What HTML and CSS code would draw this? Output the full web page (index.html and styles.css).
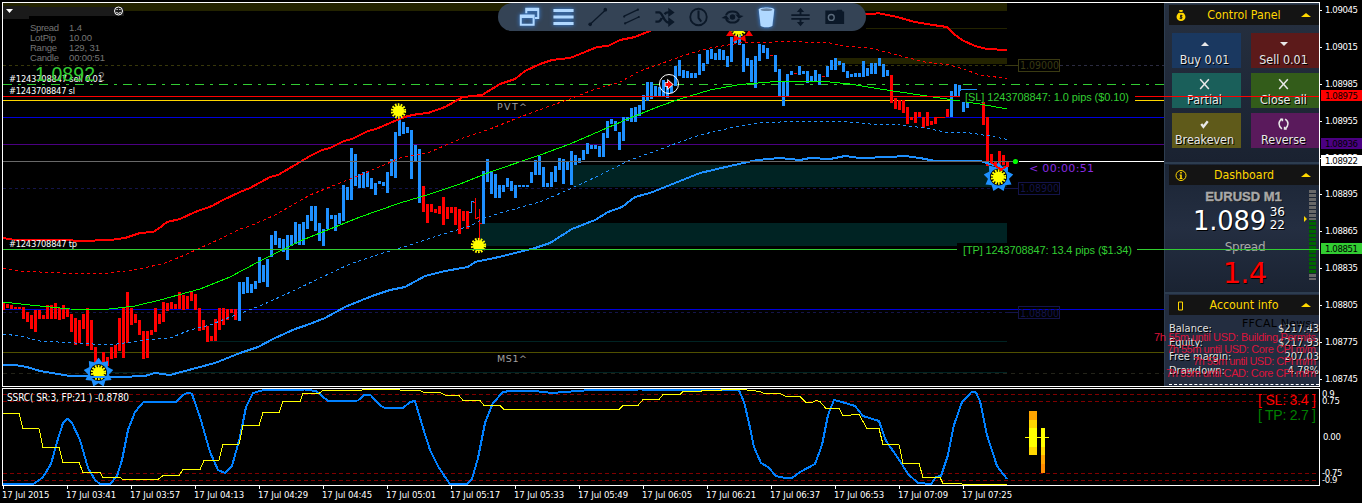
FILE: index.html
```html
<!DOCTYPE html>
<html lang="en">
<head>
  <meta charset="UTF-8" />
  <meta name="viewport" content="width=device-width, initial-scale=1.0"/>
  <title>EURUSD M1</title>
  <link rel="stylesheet" href="styles.css">
</head>
<body>
  <div class="terminal">
    <div class="workspace">

      <!-- price chart and oscillator share one canvas -->
      <svg class="chart" width="1320" height="490" viewBox="0 0 1320 490">
        <defs>
          <symbol id="sun" viewBox="-8 -8 16 16">
            <circle r="5.6" fill="#ffff00"/>
            <circle r="6.2" fill="none" stroke="#ffff00" stroke-width="3" stroke-dasharray="1.600 1.180"/>
          </symbol>
          <symbol id="bigSun" viewBox="-15 -15 30 30">
            <g fill="#1e90ff">
              <path id="ray" d="M-4.4 -9L0 -15L4.4 -9Z"/>
              <use href="#ray" transform="rotate(40)"/>
              <use href="#ray" transform="rotate(80)"/>
              <use href="#ray" transform="rotate(120)"/>
              <use href="#ray" transform="rotate(160)"/>
              <use href="#ray" transform="rotate(200)"/>
              <use href="#ray" transform="rotate(240)"/>
              <use href="#ray" transform="rotate(280)"/>
              <use href="#ray" transform="rotate(320)"/>
            </g>
            <circle r="9.4" fill="#000" stroke="#1e90ff" stroke-width="1.6"/>
          </symbol>
        </defs>

        <!-- zones -->
        <g class="crisp">
          <rect x="3" y="3" width="1004" height="8" fill="#232300"/>
          <rect x="835" y="58" width="172" height="6" fill="#232300"/>
          <rect x="573" y="165" width="434" height="22" fill="#002323"/>
          <rect x="479" y="223" width="528" height="23" fill="#002323"/>
          <path class="line" d="M866 28.5H1007" stroke="#232300"/>
          <path class="line" d="M208 341.5H1007M100 372.5H1007" stroke="#002323"/>
        </g>

        <!-- levels -->
        <g class="crisp line">
          <path d="M3 65.5H1007" stroke="#37370a" stroke-dasharray="3 3"/>
          <path d="M1060 65.5H1164" stroke="#2b2b40" stroke-dasharray="3 3"/>
          <path d="M3 188.5H1007M3 312.5H1007" stroke="#14144b" stroke-dasharray="3 3"/>
          <path d="M3 373.5H1164" stroke="#232319" stroke-dasharray="4 4"/>
          <path d="M3 84.5H1164" stroke="#32cd32" stroke-dasharray="9 6 3 6"/>
          <path d="M3 100.5H1164" stroke="#ffd700"/>
          <path d="M3 117.5H1164M3 309.5H1164" stroke="#0000dc"/>
          <path d="M3 144.5H1164" stroke="#4b0082"/>
          <path d="M3 352.5H1164" stroke="#505000"/>
        </g>

        <!-- candles are filled in by chart.js -->
        <g class="crisp candles">
          <path id="bearBars" class="bar bear" d=""/>
          <path id="bullBars" class="bar bull" d=""/>
          <path class="line bull" d="M469 212.5H471.5V201.5H474"/>
          <path class="line bear" d="M473 202.5H475.5M475.5 198V219M475.5 218.5H478M479.5 209V240M477 217.5H479M479 223.5H482"/>
          <path class="line bear" d="M770 55.5H773M794 73.5H797M822 76.5H825M937 117.5H945"/>
        </g>

        <!-- channel -->
        <g class="crisp curves">
          <path class="thick bear" d="M3 238L12 239.500L65 240L80 241L110 240L125 238L140 233L153 232L158 229L167 222L180 219L195 212L212 206L223 200L240 192L250 188L270 177L278 175L295 165L310 156L322 150L330 148L344 141L352 139L368 131L376 129L390 123L402 118L408 116L418 114L428 113L445 107L463 97L482 95L500 84L515 79L525 71L540 64L552 60L570 58L585 52L597 47L608 46L620 40L635 37L652 30L690 20L740 14L880 13.500L897 17L915 22L933 25L947 27L954 34L962 40L975 46L987 49L1007 50"/>
          <path class="line bear dash" d="M3 268L20 271L60 273L110 273L140 269L165 263L185 255L200 248L220 239L240 229L250 226L275 215L310 195L330 187L350 179L370 171L400 158L430 152L460 139L490 129L520 117L550 106L570 99L590 91L620 82L640 71L660 64L685 55L710 48L740 43L790 41.500L830 43L845 46L870 48L890 53L905 57L925 62L950 65L960 68L980 75L1007 78.500"/>
          <path class="line" stroke="#00ff00" d="M3 302L30 305L70 309L105 309.500L135 306L160 300L200 289L230 277L260 261L300 241L330 229L360 217L400 203L430 194L460 184L490 172L540 155L570 144L600 131L630 118L660 106L680 99L710 90L740 84.500L770 82L800 81L830 82L850 84L880 89L920 95L960 101L980 104L1007 109"/>
          <path class="line bull dash" d="M3 334L20 336L40 341L75 343L110 345L145 340L170 338L190 330L210 325L230 317L260 306L295 290L320 278L350 264L380 254L410 245L440 235L470 226L485 218L500 213L540 202L570 189L600 175L630 160L650 153L680 142L700 135L730 128L760 123L790 121.500L850 122L870 124L900 125L925 128L945 132L970 133L990 136L1007 139.500"/>
          <path class="thick bull" d="M3 365L15 365L27 367L40 371L70 376L120 377L145 376L155 373L170 375L185 371L215 363L240 353L258 347L275 338L295 329L307 325L325 318L345 307L362 300L375 295L390 290L405 287L425 276L445 271L468 267L475 262L499 257L535 248L550 243L572 229L595 220L608 212L622 207L635 197L650 193L680 181L700 173L730 166L757 160L780 158L800 160L810 158L830 159L845 156L860 158L890 157L905 156L920 158L930 160L940 161.500L965 161L982 161.500L990 164L1000 167L1008 170"/>
        </g>

        <!-- bid line -->
        <path class="crisp line" d="M3 161.500H1013" stroke="#696969"/>
        <path class="crisp line" d="M1019 161.500H1164" stroke="#fff"/>
        <circle cx="1015.500" cy="161.500" r="2.600" fill="#00ff00"/>

        <!-- round number boxes -->
        <g class="tahoma">
          <g fill="#3a3a12" stroke="#3a3a12"><path class="crisp line" d="M1007 65.500H1018.500V59.500H1059.500V71.500H1018.500V65"/><text stroke="none" x="1020" y="69" font-size="10.500" textLength="39">1.09000</text></g>
          <g fill="#14144b" stroke="#14144b"><path class="crisp line" d="M1007 188.500H1018.500V182.500H1059.500V194.500H1018.500V188"/><text stroke="none" x="1020" y="192" font-size="10.500" textLength="39">1.08900</text></g>
          <g fill="#14144b" stroke="#14144b"><path class="crisp line" d="M1007 312.500H1018.500V306.500H1059.500V318.500H1018.500V312"/><text stroke="none" x="1020" y="317" font-size="10.500" textLength="39">1.08800</text></g>
        </g>

        <!-- markers -->
        <use href="#sun" x="390.500" y="103" width="16" height="16"/>
        <use href="#sun" x="470.500" y="237.500" width="16" height="16"/>
        <use href="#bigSun" x="83.500" y="357.500" width="30" height="30"/>
        <use href="#sun" x="90.500" y="364.500" width="16" height="16"/>
        <path class="crisp thick bull" d="M88 377H108"/>
        <use href="#bigSun" x="983.500" y="162" width="30" height="30"/>
        <use href="#sun" x="990.500" y="169" width="16" height="16"/>
        <path class="crisp thick bear" d="M990 161L1001 170L1008 165"/>
        <use href="#sun" x="730.500" y="21" width="16" height="16"/>
        <g fill="#ff0000">
          <path d="M726 36L730 30L734 36ZM745 36L749 30L753 36ZM733 42L734 35L740 38L745 35L746 42L740 39Z"/>
        </g>
        <g>
          <circle cx="669" cy="84" r="9.500" fill="none" stroke="#fff"/>
          <path d="M665.500 83H668V80.500L672.500 84.500L668 88.500V86H665.500Z" fill="#ff0000" stroke="#fff" stroke-width="1.600" paint-order="stroke"/>
        </g>

        <!-- order tags -->
        <rect x="960" y="91" width="175" height="11" fill="#000"/>
        <path class="crisp line bull" d="M961 89.500H977"/>
        <rect x="957" y="243" width="180" height="13" fill="#000"/>
        <path class="crisp line" d="M3 249.500H957M1137 249.500H1319" stroke="#32cd32"/>
        <text class="arial" x="963" y="254" font-size="11" fill="#32cd32" textLength="169">[TP] 1243708847: 13.4 pips ($1.34)</text>
        <text class="verdana" x="1029" y="172" font-size="11" fill="#8a2be2" textLength="65">&lt; 00:00:51</text>

        <!-- comments in the corner -->
        <g fill="#1a1a1a"><rect x="3" y="6" width="26" height="13"/><rect x="29" y="7" width="95" height="9"/></g>
        <path d="M6 9H13L9.500 13Z" fill="#fff"/>
        <g fill="none" stroke="#fff"><circle cx="118.500" cy="11" r="4"/><path d="M116.300 12.300Q118.500 14.500 120.700 12.300"/><path d="M116.500 9.500H117.700M119.300 9.500H120.500"/></g>
        <g class="arial" fill="#757575" font-size="9.500">
          <text x="30" y="31" textLength="29">Spread</text><text x="69" y="31" textLength="13">1.4</text>
          <text x="30" y="41" textLength="26">LotPip</text><text x="69" y="41" textLength="23">10.00</text>
          <text x="30" y="51" textLength="27">Range</text><text x="69" y="51" textLength="31">129, 31</text>
          <text x="30" y="61" textLength="29">Candle</text><text x="69" y="61" textLength="36">00:00:51</text>
        </g>
        <g class="tahoma" fill="#fff" font-size="9.300">
          <text x="9" y="82" textLength="94">#1243708847 sell 0.01</text>
          <text x="9" y="94" textLength="66">#1243708847 sl</text>
          <text x="9" y="247" textLength="68">#1243708847 tp</text>
        </g>
        <text class="arial" x="35" y="80.500" font-size="19.500" fill="#32cd32" textLength="60">1.0892</text>
        <text class="arial" x="98" y="81" font-size="12" fill="#757575">2</text>
        <g class="verdana" fill="#a0a0a0" font-size="9.500">
          <text x="497" y="110" textLength="30">PVT^</text>
          <text x="497" y="362" textLength="30">MS1^</text>
        </g>

        <!-- oscillator -->
        <g class="crisp">
          <path class="line" d="M3 394.500H1319M3 401.500H1319M3 473.500H1319M3 480.500H1319" stroke="#800000" stroke-dasharray="4 3"/>
          <path class="thick" stroke="#0080ff" d="M3 484L33 484L38 481L43 477L51 464L57 442L63 423L68 418.500L72 423L80 440L88 468L95 480L100 484L110 484L117 476L122 460L128 430L135 412L143 402.500L176 402L183 395L188 392.500L192 394L200 417L210 452L218 470L225 473L232 466L240 437L246 407L253 393L262 390.500L305 389.500L316 391L328 401L358 400.500L364 395L370 394.500L381 406L385 408L403 408L410 402L415 401L423 428L430 450L438 466L445 477L450 484L467 484L472 479L478 458L485 423L493 403L503 392L510 391L535 391L552 393L590 390L640 389.500L739 390.500L744 402L749 423L754 447L761 463L768 467L776 476L785 478L792 478L800 472L815 464L822 445L828 415L834 400L842 402L855 406L863 416L879 421L886 441L898 458L908 474L918 483L931 484L936 477L941 476L948 455L954 425L962 402L972 391.500L976 392.500L980 401L987 435L997 466L1007 479"/>
          <path class="line" stroke="#ffff00" d="M3 413.500H19L23 428.500H39L43 447.500H59L63 462.500H79L83 472.500H100L103 477.500H120L123 479.500H158L163 475.500H179L183 469.500H200L204 460.500H219L223 444.500H239L243 425.500H259L263 412.500H279L283 401.500H300L303 393.500H319L323 390.500H360L364 389.500H398L402 390.500H420L424 392.500H440L446 395.500H459L463 400.500H480L484 405.500H500L504 409.500H619L623 405.500H638L643 399.500H659L663 394.500H680L683 391.500H700L703 390.500H720L723 389.500H742L760 391.500L764 393.500L780 393.500L786 396.500H800L806 402.500H812L816 400.500L820 401.500L826 408.500H839L843 415.500L859 414.500L867 428.500H879L883 444.500H899L903 463.500H919L923 477.500H940L943 483.500H960L964 484.500H1007"/>
          <path class="line" d="M1025 437.500H1049" stroke="#ffff00"/>
          <rect x="1029" y="411" width="8" height="44" fill="#ffa500"/><rect x="1029" y="420" width="8" height="35" fill="#ffd700"/><rect x="1029" y="428" width="8" height="19" fill="#ffff00"/>
          <rect x="1041" y="428" width="4" height="45" fill="#ff8c00"/><rect x="1041" y="428" width="4" height="36" fill="#ffa500"/><rect x="1041" y="428" width="4" height="27" fill="#ffd700"/><rect x="1041" y="428" width="4" height="19" fill="#ffff00"/>
        </g>
        <text class="tahoma" x="7" y="401" font-size="10" fill="#fff" textLength="122">SSRC( SR:3, FP:21 ) -0.8780</text>
        <text class="arial" x="1258" y="405" font-size="14" fill="#ff0000" textLength="58">[ SL: 3.4 ]</text>
        <text class="arial" x="1258" y="420" font-size="14" fill="#008000" textLength="58">[ TP: 2.7 ]</text>

        <path class="crisp line" d="M2.500 2.500H1319.500V386.500H2.500ZM2.500 388.500H1319.500V485.500H2.500Z" stroke="#fff"/>
        <path id="timeTicks" class="crisp line" d="" stroke="#fff"/>
      </svg>

      <div class="toolbar">
        <svg class="on" viewBox="0 0 24 24"><path class="icon" stroke-width="2.200" d="M8.500 8V3H21.500V13H18M2.500 10.500H16.500V20.500H2.500Z"/><path class="icon" stroke-width="3" d="M8 4H22M2 11.500H17"/></svg>
        <svg class="on" viewBox="0 0 24 24"><path class="icon" stroke-width="3.200" d="M1 5H23M1 12H23M1 19H23"/></svg>
        <svg viewBox="0 0 24 24"><path class="icon" stroke-width="1.400" d="M4 20L21 4"/><circle cx="4" cy="20" r="2"/><circle cx="20.500" cy="4" r="2"/></svg>
        <svg viewBox="0 0 24 24"><path class="icon" stroke-width="1.400" d="M4 11L19 4M5 19L20 12"/><circle cx="4" cy="11.500" r="1.200"/><circle cx="19" cy="4" r="1.200"/><circle cx="5" cy="19" r="1.200"/><circle cx="20" cy="12" r="1.200"/></svg>
        <svg viewBox="0 0 24 24"><path class="icon" stroke-width="2.600" d="M1 7H5C9 7 10 18 15 18H17M1 17H4C6 17 7 15 8 13M11 9C12 7.500 13 7 15 7H17"/><path d="M15 2L22 7L15 12ZM15 12L22 17.500L15 23Z"/></svg>
        <svg viewBox="0 0 24 24"><circle class="icon" stroke-width="2" cx="12" cy="12" r="9"/><path class="icon" stroke-width="2.200" d="M12 5V13L15 17"/></svg>
        <svg viewBox="0 0 24 24"><path class="icon" stroke-width="2.200" d="M5 10C7 4.500 17 4.500 19 10M19 14C17 19.500 7 19.500 5 14"/><path d="M15 9L24 11L19 14ZM9 15L0 13L5 10Z"/><circle cx="12" cy="12" r="3"/></svg>
        <svg class="on" viewBox="0 0 24 24"><path d="M3.500 4C3.500 1 20.500 1 20.500 4L18.500 21C18 24 6 24 5.500 21Z"/><ellipse cx="12" cy="4" rx="6.500" ry="1.500" fill="#6a86a5"/></svg>
        <svg viewBox="0 0 24 24"><path class="icon" stroke-width="2" d="M2 10H22M2 14H22M12 5V10M12 14V19"/><path d="M8 6.500L12 2L16 6.500ZM8 17.500L12 22L16 17.500Z"/></svg>
        <svg viewBox="0 0 24 24"><path d="M2 5H14L15 4H20L21 6H22.500V19.500H2Z"/><circle cx="8.500" cy="12.500" r="3.200" fill="none" stroke="#5b6b7c" stroke-width="1.500"/></svg>
      </div>

      <div class="panel">
        <section class="box control">
          <header>
            <svg viewBox="0 0 12 14"><path d="M4 1H8L7.500 3.500C13 7 11 13 6 13S-1 7 4.500 3.500Z"/><path d="M4 3.700H8M6 6V11M7.500 7H5.500V8.500H7V10H4.500" stroke="#141414" fill="none"/></svg>
            <h2>Control Panel</h2>
            <i class="up"></i>
          </header>
          <div class="buttons">
            <button class="buy"><i class="up"></i>Buy 0.01</button>
            <button class="sell"><i class="down"></i>Sell 0.01</button>
            <button class="partial"><svg viewBox="0 0 12 12"><path d="M2 2L10 11M10 2L2 11"/></svg>Partial</button>
            <button class="close"><svg viewBox="0 0 12 12"><path d="M2 2L10 11M10 2L2 11"/></svg>Close all</button>
            <button class="breakeven"><svg viewBox="0 0 12 12"><path stroke-width="2.200" d="M3 6.500L5 9L9 4"/></svg>Breakeven</button>
            <button class="reverse"><svg viewBox="0 0 12 12"><path d="M4.500 2C1 4 1 8 4.500 11M7.500 2C11 4 11 8 7.500 11"/><path d="M3 2H5V4M9 11H7V9"/></svg>Reverse</button>
          </div>
        </section>

        <section class="box dashboard">
          <header>
            <svg viewBox="0 0 12 12"><circle cx="6" cy="6" r="5" fill="none" stroke="#ffd700"/><path d="M5.200 2.500H6.800V4H5.200ZM4.500 5H6.800V8.500H7.500V9.500H4.500V8.500H5.200V6H4.500Z"/></svg>
            <h2>Dashboard</h2>
            <i class="up"></i>
          </header>
          <div class="quote">
            <div class="figures">
              <div class="symbol">EURUSD M1</div>
              <div class="price"><span>1.089</span><small>36<br>22</small></div>
              <div class="spread">Spread</div>
              <div class="pips">1.4</div>
            </div>
            <i class="pointer"></i>
            <div class="meter"></div>
          </div>
        </section>

        <section class="box account">
          <header>
            <svg viewBox="0 0 12 12"><path d="M3.500 2.500H7.500V10.500H3.500Z" fill="none" stroke="#ffd700"/></svg>
            <h2>Account info</h2>
            <i class="up"></i>
          </header>
          <dl>
            <dt>Balance:</dt><dd>$217.43</dd>
            <dt>Equity:</dt><dd>$217.93</dd>
            <dt>Free margin:</dt><dd>207.03</dd>
            <dt>Drawdown:</dt><dd>4.78%</dd>
          </dl>
        </section>
      </div>

      <!-- order lines and calendar text run over the panel -->
      <svg class="overlay" width="1320" height="490" viewBox="0 0 1320 490">
        <path class="crisp line" d="M3 96.500H960M1135 96.500H1319" stroke="#ff0000"/>
        <path class="crisp line" d="M1137 249.500H1319" stroke="#32cd32"/>
        <text class="arial" x="965" y="101" font-size="11" fill="#32cd32" textLength="164">[SL] 1243708847: 1.0 pips ($0.10)</text>
        <g class="arial" font-size="11" fill="#dc143c">
          <text class="verdana" x="1242" y="327" font-size="11" fill="#000" textLength="73">FFCAL News:</text>
          <text x="1154" y="341" textLength="162">7h 55m until USD: Building Permits</text>
          <text x="1167" y="353" textLength="149">7h 55m until USD: Core CPI m/m</text>
          <text x="1193" y="365" textLength="123">7h 55m until USD: CPI m/m</text>
          <text x="1166" y="377" textLength="150">7h 55m until CAD: Core CPI m/m</text>
        </g>
      </svg>

      <div class="timeAxis">
        <span>17 Jul 2015</span><span>17 Jul 03:41</span><span>17 Jul 03:57</span><span>17 Jul 04:13</span>
        <span>17 Jul 04:29</span><span>17 Jul 04:45</span><span>17 Jul 05:01</span><span>17 Jul 05:17</span>
        <span>17 Jul 05:33</span><span>17 Jul 05:49</span><span>17 Jul 06:05</span><span>17 Jul 06:21</span>
        <span>17 Jul 06:37</span><span>17 Jul 06:53</span><span>17 Jul 07:09</span><span>17 Jul 07:25</span>
      </div>
    </div>

    <div class="priceAxis">
      <span>1.09045</span><span>1.09015</span><span>1.08985</span><span>1.08955</span><span>1.08925</span>
      <span>1.08895</span><span>1.08865</span><span>1.08835</span><span>1.08805</span><span>1.08775</span><span>1.08745</span>
      <b class="tag sl">1.08975</b>
      <b class="tag level">1.08936</b>
      <b class="tag bid">1.08922</b>
      <b class="tag tp">1.08851</b>
      <div class="oscAxis">
        <em class="r1">0.9</em><em class="r2">0.75</em><em class="r3">0.00</em><em class="r4">-0.75</em><em class="r5">-0.9</em>
      </div>
    </div>
  </div>

  <script src="chart.js"></script>
</body>
</html>
```

FILE: styles.css
```css
body {
  margin: 0;
  background: #000;
  color: #fff;
  font-family: 'DejaVu Sans Condensed', 'DejaVu Sans', sans-serif;
  font-stretch: condensed;
  overflow: hidden;
}

.terminal {
  display: flex;
  width: 1362px;
  height: 503px;
}

.workspace {
  position: relative;
  width: 1320px;
}

.chart {
  display: block;
}

.overlay {
  position: absolute;
  top: 0;
  left: 0;
}

/* chart drawing */
.crisp {
  shape-rendering: crispEdges;
}

.line {
  fill: none;
  stroke-width: 1;
}

.thick {
  fill: none;
  stroke-width: 2;
}

.bar {
  fill: none;
  stroke-width: 3;
}

.bear {
  stroke: #ff0000;
}

.bull {
  stroke: #1e90ff;
}

.dash {
  stroke-dasharray: 3 3;
}

.tahoma {
  font-family: 'DejaVu Sans Condensed', 'DejaVu Sans', sans-serif;
  font-stretch: condensed;
}

.verdana {
  font-family: 'DejaVu Sans', sans-serif;
  font-stretch: normal;
}

.arial {
  font-family: 'Liberation Sans', Arial, sans-serif;
}

/* toolbar */
.toolbar {
  position: absolute;
  left: 498px;
  top: 3px;
  width: 368px;
  height: 28px;
  box-sizing: border-box;
  padding: 0 20px 0 20px;
  border-radius: 14px;
  background: #344355;
  display: flex;
  align-items: center;
  justify-content: space-between;
}

.toolbar svg {
  width: 23px;
  height: 22px;
  fill: #0b1828;
}

.toolbar .icon {
  fill: none;
  stroke: #0b1828;
}

.toolbar .on {
  fill: #b0d8ff;
  filter: drop-shadow(0 0 2px #3a8cf0);
}

.toolbar .on .icon {
  stroke: #b0d8ff;
}

/* side panel */
.panel {
  position: absolute;
  left: 1164px;
  top: 3px;
  width: 155px;
  height: 383px;
  overflow: hidden;
  display: flex;
  flex-direction: column;
  background: #1d2737;
}

.box {
  box-sizing: border-box;
  border-left: 1px solid #2d3d50;
  border-top: 2px solid #2d3d50;
  background: linear-gradient(#263040, #1a2231);
  padding-left: 4px;
}

.control {
  height: 159px;
  border-top-width: 1px;
}

.dashboard {
  height: 130px;
  background: linear-gradient(#1b2535, #242e41 50%, #1a2332);
}

.account {
  height: 94px;
  background: #232d40;
}

.box header {
  display: flex;
  align-items: center;
  height: 20px;
  margin-top: 1px;
  padding: 0 8px 0 6px;
  background: #141414;
}

.box header svg {
  width: 12px;
  height: 13px;
  fill: #ffd700;
}

.box h2 {
  flex: 1;
  margin: 0;
  text-align: center;
  font-size: 12.3px;
  font-weight: normal;
  color: #ffd700;
}

.up,
.down {
  width: 0;
  height: 0;
  border: 5px solid transparent;
  border-top-width: 0;
  border-bottom: 4px solid #ffd700;
}

.down {
  border-top: 4px solid #e8e8e8;
  border-bottom-width: 0;
}

.buttons {
  display: grid;
  grid-template-columns: 69px 69px;
  gap: 5px 10px;
  padding: 8px 0 0 3px;
}

.buttons button {
  height: 35px;
  border: none;
  padding: 1px 4px 0 0;
  display: flex;
  flex-direction: column;
  align-items: center;
  justify-content: flex-end;
  font-family: inherit;
  font-stretch: inherit;
  font-size: 12.4px;
  line-height: 17px;
  color: #e8e8e8;
  text-shadow: 1px 1px 0 #000;
  overflow: visible;
  white-space: nowrap;
}

.buttons .up,
.buttons .down {
  border-left-width: 4px;
  border-right-width: 4px;
  border-bottom-color: #e8e8e8;
  margin-bottom: 5px;
}

.buttons svg {
  width: 13px;
  height: 13px;
  margin-bottom: 1px;
  fill: none;
  stroke: #e8e8e8;
  stroke-width: 1.4;
}

.buy { background: #1a3860; }
.sell { background: #5c1a1a; }
.partial { background: #1a5f5a; }
.close { background: #335c1a; }
.breakeven { background: #5f5a1a; }
.reverse { background: #5a1a5c; }

.quote {
  display: flex;
}

.figures {
  width: 126px;
  padding-left: 9px;
  box-sizing: border-box;
  text-align: center;
  font-family: 'DejaVu Sans', sans-serif;
  font-stretch: normal;
}

.symbol {
  margin-top: 4px;
  padding-left: 14px;
  font: bold 13px/15px 'Liberation Sans', Arial, sans-serif;
  color: #a9a9a9;
  -webkit-text-stroke: 0.4px #a9a9a9;
  text-shadow: 1px 1px 0 #111;
  white-space: nowrap;
}

.price {
  display: flex;
  align-items: center;
  gap: 4px;
  height: 33px;
  margin-left: 15px;
  font-size: 25.8px;
  letter-spacing: -0.2px;
  text-shadow: 1px 1px 0 #000;
}

.price small {
  font-size: 12px;
  line-height: 13px;
  margin-top: -3px;
}

.spread {
  padding-left: 17px;
  margin-top: 3px;
  font-size: 12px;
  line-height: 15px;
  letter-spacing: -0.3px;
  color: #a9a9a9;
}

.pips {
  padding-left: 16px;
  font-size: 29px;
  line-height: 36px;
  letter-spacing: -0.8px;
  color: #ff0000;
  text-shadow: 1px 1px 0 #000;
}

.pointer {
  width: 0;
  height: 0;
  margin-top: 31px;
  margin-left: 9px;
  border: 3px solid transparent;
  border-left-color: #ffd700;
  border-right-width: 0;
}

.meter {
  width: 7px;
  height: 90px;
  margin: 5px 0 0 2px;
  background:
    repeating-linear-gradient(transparent 0 3px, #1c2534 3px 4px),
    linear-gradient(#696969 0 30px, #006400 30px 83px, #696969 83px);
}

.account dl {
  display: grid;
  grid-template-columns: 1fr auto;
  margin: 7px 0 0;
  padding-bottom: 6px;
  border-bottom: 1px dashed #fff;
  font-size: 11px;
  line-height: 14px;
  color: #e0e0e0;
  text-shadow: 1px 1px 0 #000;
}

.account dd {
  margin: 0;
  text-align: right;
}

/* axes */
.timeAxis {
  display: flex;
  padding-left: 2px;
  margin-top: -1px;
  font-size: 9.5px;
  line-height: 12px;
  letter-spacing: -0.1px;
}

.timeAxis span {
  width: 64px;
  flex: none;
  white-space: nowrap;
}

.priceAxis {
  position: relative;
  flex: 1;
  display: flex;
  flex-direction: column;
  padding-top: 4px;
  font-size: 9.5px;
  letter-spacing: -0.4px;
  line-height: 12px;
}

.priceAxis span {
  flex: none;
  height: 36.9px;
  display: flex;
  align-items: flex-start;
}

.priceAxis span::before {
  content: '';
  width: 2px;
  height: 1px;
  margin: 6px 3px 0 0;
  background: #fff;
}

.tag {
  position: absolute;
  left: 1px;
  right: 0;
  height: 11px;
  line-height: 11px;
  padding-left: 4px;
  font-weight: normal;
  color: #000;
}

.tag.sl { top: 90px; background: #ff0000; }
.tag.level { top: 138px; background: #4b0082; }
.tag.bid { top: 155px; background: #fff; }
.tag.tp { top: 243px; background: #32cd32; }

.oscAxis em {
  position: absolute;
  left: 2px;
  font-style: normal;
}

.oscAxis .r1 { top: 388px; }
.oscAxis .r2 { top: 395px; }
.oscAxis .r3 { top: 431px; left: 3px; }
.oscAxis .r4 { top: 467px; }
.oscAxis .r5 { top: 474px; }
```

FILE: chart.js
```js
// every run of bars: index of the first one, then [top, bottom] pairs (null = no body)
const STEP = 4;
const FIRST_X = 3.5;

const bearRuns = [
  { from: 0, bars: [[303,310],[304,308],[305,309],[307,309],[307,309],[307,319],[312,322],[315,329],[310,332],[310,319],[315,319],[305,319],[305,319],[303,319],[308,320],[305,319],[309,317],[314,332],[318,345],[320,343],[314,329],[308,346],[320,350],[347,364],[363,373],[352,368],[357,366],[347,359],[345,358],[318,351],[308,358],[292,343],[308,325],[314,323],[320,335],[331,359],[331,358],[330,335],[308,332],[314,324],[302,322],[303,311],[302,309],[304,309],[292,309],[295,310],[296,309],[291,301],[294,310],[308,331],[320,330],[326,342],[336,341],[319,341],[308,330],[308,325],[309,320],[309,313],[309,320]] },
  { from: 105, bars: [[186,212],[204,223],[204,212],[209,213],[206,214],[197,225],[207,219],[207,213],[207,225],[209,234],[211,221],[211,229]] },
  { from: 222, bars: [[75,103],[98,109],[100,110],[100,113],[107,124],[117,120],[112,123],[112,117],[117,128],[112,126],[121,125],[117,124],null,null,[109,117]] },
  { from: 245, bars: [[102,125],[117,166],[154,161],[162,166],[151,167],[155,165],[161,167]] }
];

const bullRuns = [
  { from: 59, bars: [[282,321],[282,294],[277,293],[284,293],[281,289],[257,283],[265,282],[259,287],[235,257],[231,245],[238,248],[239,252],[235,260],[235,246],[222,244],[224,245],[222,245],[215,229],[206,221],[206,231],[223,241],[229,246],[208,229],[215,219],[215,231],[213,224],[185,221],[187,200],[148,200],[154,186],[174,188],[172,188],[171,187],[178,189],[183,195],[181,184],[182,186],[172,193],[159,176],[132,178],[118,136],[122,134],[127,133],[130,179],[145,161],[149,203]] },
  { from: 120, bars: [[171,224],[159,182],[172,194],[174,198],[185,198],[185,192],[178,187],[181,191],[185,198],[185,187],[185,187],[185,187],[172,183],[160,175],[156,175],[167,187],[183,187],[172,187],[166,182],[158,170],[159,184],[162,170],[151,185],[155,165],[158,163],[150,160],[143,154],[145,149],[145,149],[146,157],[133,157],[121,138],[119,124],[121,131],[132,150],[117,141],[117,121],[108,122],[107,122],[105,116],[95,110],[82,101],[82,99],[86,96],[87,96],[80,96],[86,98],[86,93],[66,86],[60,76],[70,78],[71,78],[73,78],[73,78],[54,75],[63,71],[50,64],[49,59],[53,60],[49,60],[50,60],[56,67],[37,62],[35,43],[35,45],[44,72],[58,66],[60,82],[56,88],[44,61],[45,53],[48,59],null,[55,72],[69,96],[81,106],[74,97],[71,75],null,[66,75],[71,74],[71,83],[76,82],[70,82],[74,85],null,[66,77],[60,70],[58,70],[61,65],[63,72],[71,78],[74,77],[73,77],[73,77],[61,77],[68,76],[63,74],[63,74],[58,66],[64,77],[70,76]] },
  { from: 237, bars: [[91,117],[84,96],[85,97],[102,112],[102,108]] }
];

function barPath(runs) {
  let d = '';
  runs.forEach(run => {
    run.bars.forEach((bar, i) => {
      if (!bar) return;
      const x = FIRST_X + (run.from + i) * STEP;
      d += `M${x} ${bar[0]}V${bar[1]}`;
    });
  });
  return d;
}

document.getElementById('bearBars').setAttribute('d', barPath(bearRuns));
document.getElementById('bullBars').setAttribute('d', barPath(bullRuns));

// one tick per time label
let ticks = '';
for (let i = 0; i < 16; i++) {
  ticks += `M${3.5 + i * 64} 485V489`;
}
document.getElementById('timeTicks').setAttribute('d', ticks);
```
